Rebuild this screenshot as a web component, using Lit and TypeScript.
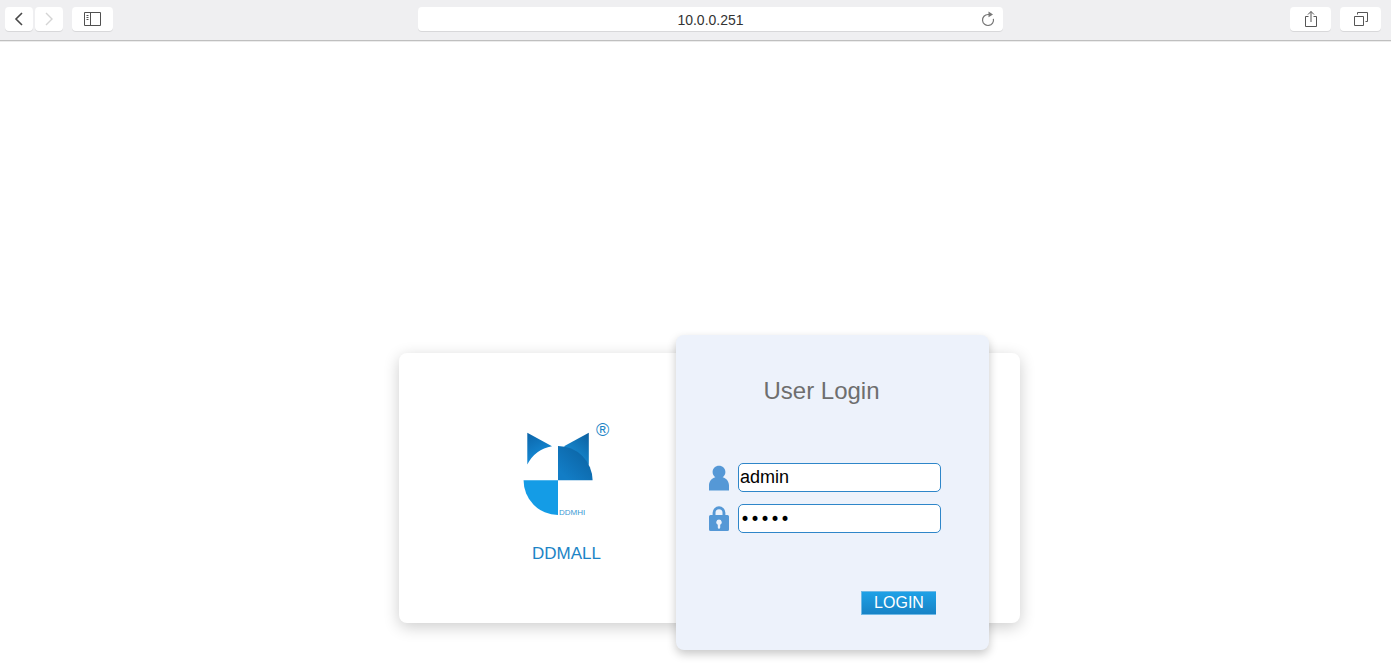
import { LitElement, html, css } from "lit";
import { customElement, state } from "lit/decorators.js";

@customElement("browser-bar")
class BrowserBar extends LitElement {
  static styles = css`
    :host { display: block; }
    * { box-sizing: border-box; }
    .bar {
      display: grid;
      grid-template-columns: 418fr 585fr 388fr;
      align-items: start;
      height: 41px;
      padding-top: 7px;
      background: #efeff1;
      border-bottom: 1px solid #bfbfbf;
      box-shadow: 0 1px 0 #ececec;
    }
    .group { display: flex; padding: 0 10px 0 5px; gap: 9px; }
    .pair { display: flex; gap: 2px; }
    .end { justify-content: flex-end; }
    button {
      display: grid;
      place-items: center;
      width: 41px;
      height: 24px;
      padding: 0;
      border: 0;
      border-radius: 4px;
      background: #fff;
      box-shadow: 0 1px 0 #d8d8da;
    }
    .narrow { width: 28px; }
    svg { display: block; fill: none; }
    .address {
      display: flex;
      align-items: center;
      height: 24px;
      padding: 0 6px 0 24px;
      border-radius: 4px;
      background: #fff;
      box-shadow: 0 1px 0 #d8d8da;
    }
    .address input {
      flex: 1;
      min-width: 0;
      padding: 2px 0 0;
      border: 0;
      outline: 0;
      background: none;
      color: #333;
      text-align: center;
      font: 14px/20px "Liberation Sans", Arial, sans-serif;
    }
    .address button { width: 18px; height: 22px; box-shadow: none; }
  `;

  render() {
    return html`
      <header class="bar">
        <div class="group">
          <div class="pair">
            <button class="narrow" aria-label="Back">
              <svg width="10" height="14" stroke="#484848" stroke-width="1.6"><path d="M8 1 2 7l6 6" /></svg>
            </button>
            <button class="narrow" aria-label="Forward">
              <svg width="10" height="14" stroke="#d4d4d4" stroke-width="1.4"><path d="m2 1 6 6-6 6" /></svg>
            </button>
          </div>
          <button aria-label="Show sidebar">
            <svg width="17" height="14" stroke="#505050">
              <path d="M.5.5h16v13H.5zM6.5.5v13M2.5 3.5h2M2.5 5.5h2M2.5 7.5h2" />
            </svg>
          </button>
        </div>
        <div class="address">
          <input aria-label="Address" .value=${"10.0.0.251"} />
          <button aria-label="Reload">
            <svg width="16" height="16" stroke="#777" stroke-width="1.2">
              <path d="M13.4 7.800A5.500 5.500 0 1 1 8 3.500h1.500" />
              <path d="m8.500.6 4.500 2.900-4.500 2.800z" fill="#777" stroke="none" />
            </svg>
          </button>
        </div>
        <div class="group end">
          <button aria-label="Share">
            <svg width="14" height="18" stroke="#555">
              <path d="M4.5 6.5h-3v10h11v-10h-3M7 12V1.500M4 4.500l3-3 3 3" />
            </svg>
          </button>
          <button aria-label="Show all tabs">
            <svg width="14" height="14" stroke="#555">
              <path d="M.5 4.500h9v9h-9zM3.500 2.500v-2h10v9h-2" />
            </svg>
          </button>
        </div>
      </header>
    `;
  }
}

@customElement("brand-mark")
class BrandMark extends LitElement {
  static styles = css`
    :host { display: block; }
    .brand { display: grid; justify-items: center; margin: 0; }
    svg { display: block; }
    .reg { font: 18px "Liberation Sans", Arial, sans-serif; }
    .tiny { font: 8px "Liberation Sans", Arial, sans-serif; }
    .name {
      margin-top: 24px;
      color: #1c84c6;
      font: 17px/20px "Liberation Sans", Arial, sans-serif;
    }
  `;

  render() {
    return html`
      <figure class="brand">
        <svg width="94" height="100" viewBox="520 420 94 100" role="img" aria-label="DDMALL logo">
          <defs>
            <linearGradient id="ear" x1="0" y1="0" x2="0.4" y2="1">
              <stop offset="0" stop-color="#0b64a8" />
              <stop offset="1" stop-color="#168fdc" />
            </linearGradient>
            <linearGradient id="earRight" x1="1" y1="0" x2="0.3" y2="1">
              <stop offset="0" stop-color="#0b5f9f" />
              <stop offset="0.7" stop-color="#1583c9" />
            </linearGradient>
            <linearGradient id="cheek" x1="1" y1="0.1" x2="0.2" y2="0.9">
              <stop offset="0" stop-color="#0b609f" />
              <stop offset="1" stop-color="#127dc6" />
            </linearGradient>
          </defs>
          <path fill="url(#ear)" d="M527.300 432.800 552 446.200A34.500 34.500 0 0 0 527.300 464.500z" />
          <path fill="url(#earRight)" d="M588.800 432.800V465L564 446.300z" />
          <path fill="url(#cheek)" d="M558 446a34.500 34.500 0 0 1 34.600 34.300H558z" />
          <path fill="#149ce6" d="M523.600 480.300H558V515a34.500 34.500 0 0 1-34.400-34.700z" />
          <text class="reg" x="596" y="436" fill="#1c84c6">®</text>
          <text class="tiny" x="559" y="515" fill="#3d9ad4">DDMHI</text>
        </svg>
        <figcaption class="name">DDMALL</figcaption>
      </figure>
    `;
  }
}

@customElement("login-form")
class LoginForm extends LitElement {
  @state() private user = "admin";
  @state() private pass = "admin";

  static styles = css`
    :host { display: block; }
    * { box-sizing: border-box; }
    form {
      display: flex;
      flex-direction: column;
      padding: 40px 48px 35px 32px;
      border-radius: 8px;
      background: #edf2fb;
      box-shadow: 0 4px 10px rgba(0, 0, 0, 0.22);
      font-family: "Liberation Sans", Arial, sans-serif;
    }
    h1 {
      margin: 0 0 56px;
      padding-right: 6px;
      color: #6e6e6e;
      text-align: center;
      font-size: 24px;
      line-height: 32px;
      font-weight: 400;
    }
    .fields { display: grid; gap: 12px; }
    .row { display: grid; grid-template-columns: 22px 1fr; gap: 8px; align-items: center; }
    svg { display: block; fill: #5598d6; }
    .row input {
      width: 100%;
      height: 29px;
      padding: 0 1px;
      border: 1px solid #2e86c9;
      border-radius: 5px;
      outline: 0;
      background: #fff;
      color: #000;
      font: 18px/24px "Liberation Sans", Arial, sans-serif;
    }
    .row input[type="password"] { font: 17px/24px "DejaVu Sans", sans-serif; }
    .login {
      align-self: flex-end;
      width: 75px;
      height: 24px;
      margin: 58px 5px 0 0;
      padding: 0;
      border: 1px solid #6fb9e6;
      border-right-width: 0;
      background: linear-gradient(#1ea1e6, #1783c6);
      color: #fff;
      font: 16px/20px "Liberation Sans", Arial, sans-serif;
    }
  `;

  render() {
    return html`
      <form @submit=${(e: Event) => e.preventDefault()}>
        <h1>User Login</h1>
        <div class="fields">
          <div class="row">
            <label for="user" aria-label="User name">
              <svg width="22" height="26" viewBox="0 0 22 26">
                <path d="M11 .8c3.600 0 6.400 2.700 6.400 6.200 0 2.400-1.200 3.900-2.700 5.200 3.800 1.300 6.300 4.200 6.300 8.300v5.100H1v-5.100c0-4.100 2.500-7 6.300-8.300C5.800 10.900 4.600 9.400 4.600 7 4.600 3.500 7.400.8 11 .8z" />
              </svg>
            </label>
            <input id="user" autocomplete="off" .value=${this.user}
              @input=${(e: Event) => (this.user = (e.target as HTMLInputElement).value)} />
          </div>
          <div class="row">
            <label for="pass" aria-label="Password">
              <svg width="22" height="26" viewBox="0 0 22 26">
                <path fill-rule="evenodd" d="M4.600 9V6.700a6.400 6.400 0 0 1 12.800 0V9h2.100Q21 9 21 10.500v13q0 1.500-1.500 1.500h-17Q1 25 1 23.500v-13Q1 9 2.500 9zM7.500 9h7V6.700a3.500 3.500 0 0 0-7 0zM11 13.500a2.800 2.800 0 0 0-1.200 5.300v2.700q0 1.200 1.200 1.200t1.200-1.200v-2.700A2.800 2.800 0 0 0 11 13.500z" />
              </svg>
            </label>
            <input id="pass" type="password" autocomplete="off" .value=${this.pass}
              @input=${(e: Event) => (this.pass = (e.target as HTMLInputElement).value)} />
          </div>
        </div>
        <button class="login" type="submit">LOGIN</button>
      </form>
    `;
  }
}

@customElement("app-root")
class AppRoot extends LitElement {
  static styles = css`
    :host {
      display: flex;
      flex-direction: column;
      min-height: 100vh;
      background: #fff;
    }
    main {
      flex: 1;
      display: flex;
      flex-direction: column;
      align-items: center;
      justify-content: flex-end;
      padding: 0 0 49px 28px;
    }
    .card {
      display: grid;
      grid-template-columns: 1fr 313px;
      align-items: center;
      width: 100%;
      max-width: 621px;
      box-sizing: border-box;
      padding-right: 31px;
      border-radius: 8px;
      background: #fff;
      box-shadow: 0 4px 16px rgba(0, 0, 0, 0.2);
    }
    .brand { padding: 8px 0 0 58px; }
    .panel { margin: -18px 0 -27px; }
  `;

  render() {
    return html`
      <browser-bar></browser-bar>
      <main>
        <section class="card">
          <brand-mark class="brand"></brand-mark>
          <login-form class="panel"></login-form>
        </section>
      </main>
    `;
  }
}
